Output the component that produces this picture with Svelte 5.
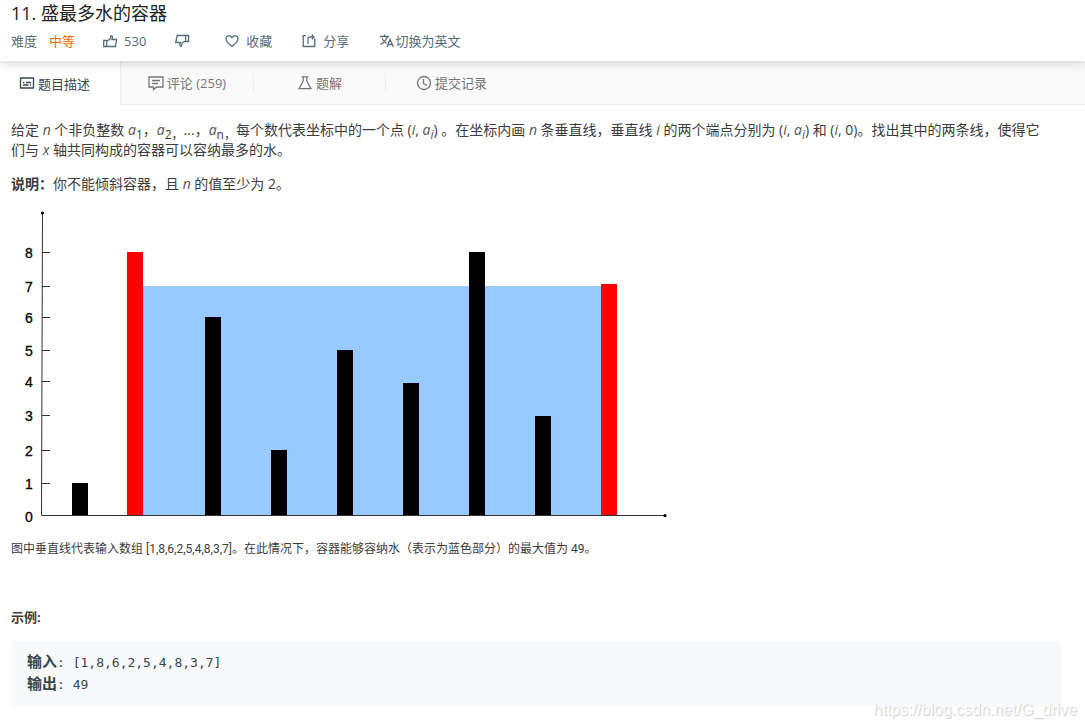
<script>
  const bars = [
    { x: 61, top: 279 },
    { x: 116, top: 48, edge: true },
    { x: 194, top: 113 },
    { x: 260, top: 246 },
    { x: 326, top: 146 },
    { x: 392, top: 179 },
    { x: 458, top: 48 },
    { x: 524, top: 212 },
    { x: 590, top: 80, edge: true }
  ];
  const ticks = [
    { n: 8, y: 48 },
    { n: 7, y: 82 },
    { n: 6, y: 113 },
    { n: 5, y: 146 },
    { n: 4, y: 177 },
    { n: 3, y: 211 },
    { n: 2, y: 246 },
    { n: 1, y: 279 },
    { n: 0, y: 312 }
  ];
</script>

<div class="page">
  <header>
    <h1>11. 盛最多水的容器</h1>
    <div class="actions">
      <span class="level">难度<b>中等</b></span>
      <button class="like">
        <svg viewBox="0 0 16 16" width="16" height="16"><path d="M1.7 7.5H4.7V13.5H1.7ZM4.7 8L8 6.2L9 2.6C10.5 2.6 10.8 4 10 6.5H14.6L13.4 13.5H4.7" /></svg>
        <span>530</span>
      </button>
      <button class="dislike" aria-label="踩">
        <svg viewBox="0 0 16 16" width="16" height="16"><path d="M14.6 8.5H11.6V2.5H14.6ZM11.6 8L8.3 9.8L7.3 13.4C5.8 13.4 5.5 12 6.3 9.5H1.7L3.2 2.5H11.6" /></svg>
      </button>
      <button class="save">
        <svg viewBox="0 0 16 16" width="16" height="16"><path d="M8 13.5C4.5 10.8 2 8.6 2 5.8C2 2.6 6 1.4 8 4.6C10 1.4 14 2.6 14 5.8C14 8.6 11.5 10.8 8 13.5Z" /></svg>
        <span>收藏</span>
      </button>
      <button class="share">
        <svg viewBox="0 0 16 16" width="16" height="16"><path d="M5 2.7H2.2V13.5H13.8V5.5M7 11V6Q7 4 9 4H12.5M10.8 1.8L13 4L10.8 6.2" /></svg>
        <span>分享</span>
      </button>
      <button class="translate">
        <svg viewBox="0 0 16 16" width="16" height="16"><path d="M1 3.5H10M5.5 1.5V3.5M8.5 3.5C7.5 7 5 9.5 1.5 11.5M3 5.5C4.5 8 5.5 9 7.5 10.5M8 14L11 6.5L14.5 14M9 11.5H13.5" /></svg>
        <span>切换为英文</span>
      </button>
    </div>
  </header>

  <nav>
    <a class="tab active" href="#description">
      <svg viewBox="0 0 16 16" width="16" height="16"><path d="M1.5 3H14.5V13H1.5ZM4 7.5H5.5M7 7.5H12M4 10H9.5M11 10H12" /></svg>
      <span>题目描述</span>
    </a>
    <a class="tab comments" href="#comments">
      <svg viewBox="0 0 16 16" width="16" height="16"><path d="M1 2H15V12H8.5L5.5 14.5V12H1ZM4 5.5H12M4 8.5H10" /></svg>
      <span>评论 (259)</span>
    </a>
    <a class="tab solution" href="#solution">
      <svg viewBox="0 0 16 16" width="16" height="16"><path d="M4.5 1.8H11.5M6.2 2V6.2L2 13.7H14L9.8 6.2V2" /></svg>
      <span>题解</span>
    </a>
    <a class="tab history" href="#history">
      <svg viewBox="0 0 16 16" width="16" height="16"><circle cx="8" cy="8" r="6.5" /><path d="M7.5 4V8.5L11 10.5" /></svg>
      <span>提交记录</span>
    </a>
  </nav>

  <main>
    <p>给定 <i>n</i> 个非负整数 <i>a</i><sub>1</sub>，<i>a</i><sub>2，</sub>...，<i>a</i><sub>n，</sub>每个数代表坐标中的一个点 (<i>i</i>, <i>a<sub>i</sub></i>) 。在坐标内画 <i>n</i> 条垂直线，垂直线 <i>i</i> 的两个端点分别为 (<i>i</i>, <i>a<sub>i</sub></i>) 和 (<i>i</i>, 0)。找出其中的两条线，使得它们与 <i>x</i> 轴共同构成的容器可以容纳最多的水。</p>
    <p><strong>说明：</strong>你不能倾斜容器，且 <i>n</i> 的值至少为 2。</p>

    <svg class="chart" viewBox="0 0 660 320" width="660" height="320" role="img" aria-label="容器">
      <rect class="water" x="132" y="82" width="458" height="230" />
      {#each bars as bar}
        <rect class:edge={bar.edge} x={bar.x} y={bar.top} width="16" height={311 - bar.top} />
      {/each}
      <path class="axis" d="M31.5 9L30.5 311.5H655" />
      <circle cx="31.5" cy="9" r="1.6" />
      <circle cx="654" cy="311.5" r="1.6" />
      {#each ticks as tick}
        {#if tick.n}
          <path class="axis" d="M31 {tick.y + 0.5}H39" />
        {/if}
        <text x="14" y={tick.y + 6}>{tick.n}</text>
      {/each}
    </svg>

    <p class="caption">图中垂直线代表输入数组 [1,8,6,2,5,4,8,3,7]。在此情况下，容器能够容纳水（表示为蓝色部分）的最大值为 49。</p>
    <p class="example"><strong>示例:</strong></p>
    <pre><strong>输入</strong>: [1,8,6,2,5,4,8,3,7]
<strong>输出</strong>: 49</pre>
  </main>
  <div class="watermark">https://blog.csdn.net/G_drive</div>
</div>

<style>
  :global(body) {
    margin: 0;
    background: #fff;
  }
  .page {
    position: relative;
    min-height: 100vh;
    overflow: hidden;
    font-family: "Open Sans", "Noto Sans CJK SC", sans-serif;
    font-size: 13px;
    color: #3c3c3c;
  }
  header {
    position: relative;
    box-sizing: border-box;
    height: 61px;
    padding: 0 11px;
    background: #fff;
    box-shadow: 0 1px 12px rgba(0, 0, 0, 0.2);
  }
  h1 {
    margin: 0;
    font-size: 18px;
    line-height: 26px;
    font-weight: 400;
    color: #212121;
  }
  .actions {
    display: flex;
    align-items: center;
    height: 29px;
    color: #546e7a;
  }
  .level {
    margin-right: 27px;
  }
  .level b {
    margin-left: 12px;
    font-weight: 400;
    color: #ef6c00;
  }
  button {
    display: flex;
    align-items: center;
    gap: 6px;
    margin: 0;
    padding: 0;
    border: 0;
    background: none;
    font: inherit;
    color: inherit;
  }
  .like,
  .save,
  .share {
    margin-right: 28px;
  }
  .dislike {
    margin-right: 34px;
  }
  .share {
    margin-right: 30px;
  }
  .save {
    margin-right: 29px;
  }
  .translate {
    gap: 0;
  }
  button svg,
  .tab svg {
    flex: none;
    fill: none;
    stroke: currentColor;
    stroke-width: 1.3;
  }
  nav {
    display: flex;
    height: 43px;
    border-bottom: 1px solid #eee;
    background: #fafafa;
  }
  .tab {
    display: flex;
    align-items: center;
    gap: 3px;
    color: #757575;
    text-decoration: none;
  }
  .active {
    box-sizing: border-box;
    width: 121px;
    height: 44px;
    padding-left: 19px;
    border-right: 1px solid #eee;
    background: #fff;
    color: #37474f;
  }
  .comments,
  .solution {
    height: 18px;
    align-self: center;
    justify-content: center;
    width: 132px;
    border-right: 1px solid #eee;
  }
  .solution {
    width: 131px;
  }
  .history {
    width: 131px;
    justify-content: center;
  }
  main {
    padding: 15px 23px 20px 11px;
  }
  p {
    margin: 0 0 14px;
    padding-right: 10px;
    font-size: 14px;
    line-height: 20px;
  }
  sub {
    font-size: 12px;
    line-height: 0;
  }
  i {
    color: #555;
  }
  strong {
    font-weight: 700;
  }
  .chart {
    display: block;
    max-width: 100%;
    margin-top: -4px;
  }
  .water {
    fill: #99caff;
  }
  .edge {
    fill: #f00;
  }
  .axis {
    fill: none;
    stroke: #333;
  }
  text {
    font-family: "Liberation Sans", sans-serif;
    font-size: 14px;
    fill: #000;
    stroke: #000;
    stroke-width: 0.3px;
  }
  .caption {
    margin: 15px 0 48px;
    font-family: Roboto, "Noto Sans CJK SC", sans-serif;
    font-size: 12px;
  }
  .example {
    margin: 0 0 14px;
    font-size: 13px;
  }
  pre {
    margin: 0;
    padding: 11px 16px;
    border-radius: 3px;
    background: #f7f9fb;
    font-family: "DejaVu Sans Mono", "Noto Sans CJK SC", monospace;
    font-size: 13px;
    line-height: 22px;
    color: #37474f;
  }
  pre strong {
    font-size: 15px;
    line-height: 16px;
  }
  .watermark {
    position: absolute;
    right: 8px;
    bottom: 8px;
    font-family: "Liberation Sans", sans-serif;
    font-size: 16px;
    line-height: 20px;
    color: #fafafa;
    text-shadow: 1px 1px 1px #ccc;
  }
</style>
